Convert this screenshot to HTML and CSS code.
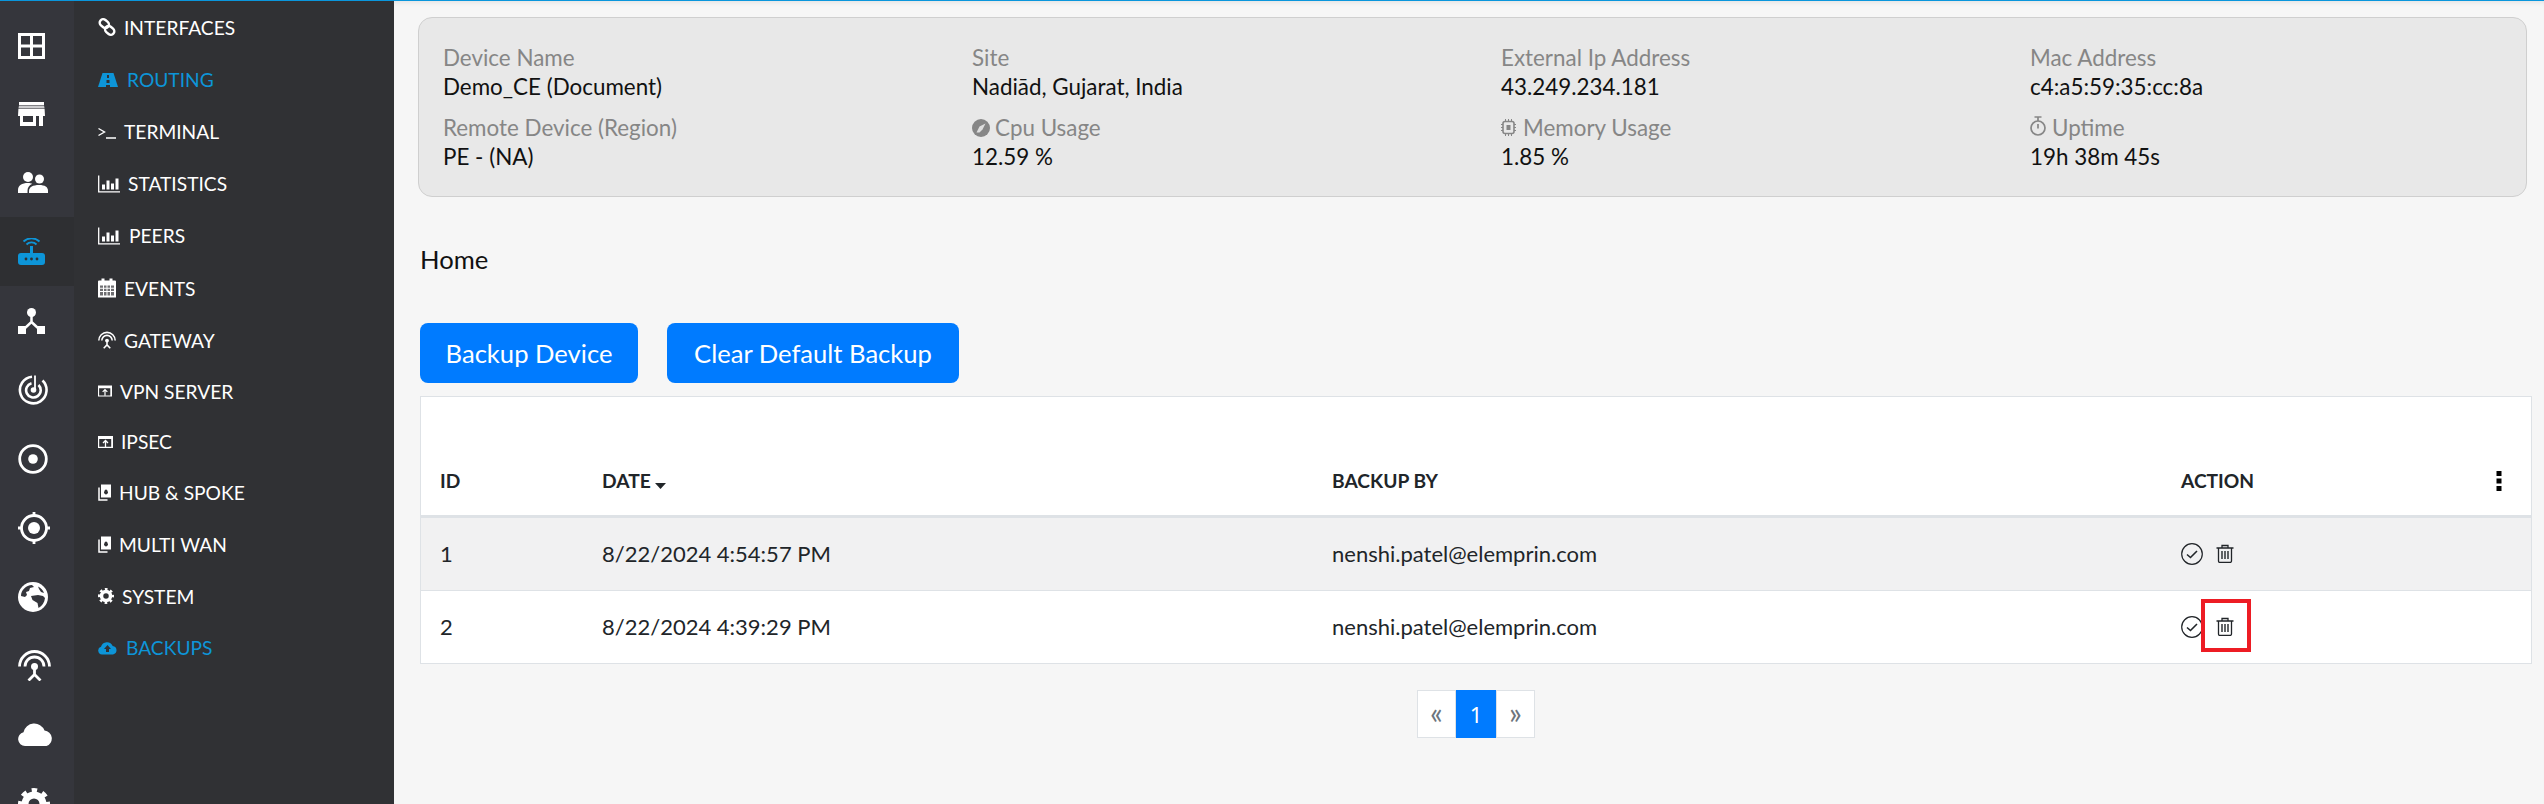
FILE: index.html
```html
<!DOCTYPE html>
<html lang="en">
<head>
<meta charset="utf-8">
<title>Backups</title>
<link rel="stylesheet" href="styles.css">
</head>
<body>
<svg class="defs" aria-hidden="true">
  <symbol id="s-grid" viewBox="0 0 27 26"><path fill="currentColor" fill-rule="evenodd" d="M0 0h27v26H0z M3 3v8.5h9V3z M15 3v8.5h9V3z M3 14.5V23h9v-8.5z M15 14.5V23h9v-8.5z"/></symbol>
  <symbol id="s-store" viewBox="0 0 27 24"><path fill="currentColor" d="M1 0h25v3H1z"/><path fill="currentColor" opacity=".75" d="M1 3.600h25l.6 3H.4z"/><path fill="currentColor" fill-rule="evenodd" d="M.4 7h26.200L27 14h-2v10h-4V14h-3v10H2V14H0z M5 14v6h10v-6z"/></symbol>
  <symbol id="s-people" viewBox="0 0 30 21"><circle cx="10" cy="5" r="5" fill="currentColor"/><circle cx="21.500" cy="7" r="4.500" fill="currentColor"/><path fill="currentColor" d="M0 21v-3c0-4.600 4-7 10-7 1.800 0 3 .3 4.300.8C11 13.300 9.500 15.800 9.500 18.800V21z"/><path fill="currentColor" d="M11 21v-2c0-4 4-6 10-6s9 2 9 6v2z"/></symbol>
  <symbol id="s-router" viewBox="0 0 27 27"><rect y="15" width="27" height="12" rx="3" fill="currentColor"/><rect x="12" y="8" width="3" height="8" fill="currentColor"/><path d="M8.500 6.500a7 7 0 0 1 10 0M5.500 3.500a11.500 11.500 0 0 1 16 0" fill="none" stroke="currentColor" stroke-width="1.800"/><circle cx="8" cy="21" r="1.400" fill="#2e2f32"/><circle cx="13.500" cy="21" r="1.400" fill="#2e2f32"/><circle cx="19" cy="21" r="1.400" fill="#2e2f32"/></symbol>
  <symbol id="s-tree" viewBox="0 0 27 26"><circle cx="13.500" cy="4.500" r="4.500" fill="currentColor"/><rect y="18" width="8" height="8" fill="currentColor"/><rect x="19" y="18" width="8" height="8" fill="currentColor"/><path d="M13.500 8v6L6 21M13.500 14L21 21" fill="none" stroke="currentColor" stroke-width="2.500"/></symbol>
  <symbol id="s-radar" viewBox="0 0 30 30"><path d="M14 1.800A13.300 13.300 0 1 0 24.500 5.500M13.500 8.200A7.300 7.300 0 1 0 20.500 10" fill="none" stroke="currentColor" stroke-width="2.600"/><path d="M17 .5v14" stroke="currentColor" stroke-width="1.800"/><circle cx="15.500" cy="15" r="2.800" fill="currentColor"/></symbol>
  <symbol id="s-target" viewBox="0 0 30 30"><circle cx="15" cy="15" r="13.300" fill="none" stroke="currentColor" stroke-width="2.800"/><circle cx="15" cy="15" r="4.800" fill="currentColor"/></symbol>
  <symbol id="s-cross" viewBox="0 0 32 32"><circle cx="16" cy="16" r="12.500" fill="none" stroke="currentColor" stroke-width="2.800"/><circle cx="16" cy="16" r="6" fill="currentColor"/><path d="M16 0v4M16 28v4M0 16h4M28 16h4" stroke="currentColor" stroke-width="2.800"/></symbol>
  <symbol id="s-globe" viewBox="0 0 30 30"><circle cx="15" cy="15" r="15" fill="currentColor"/><path fill="#35363c" d="M3 14C3 8 8 3.500 14 3l2 2-4 1-1 3-3 1 1 3-2 2zM13 14l7-1 5 1 2 2c-.5 4.500-3 8-6.500 10l-1-5-5-3zM20 4.500c3 1.500 5 3.500 6 6.500l-3-1-2-3z"/></symbol>
  <symbol id="s-antenna" viewBox="0 0 33 31"><path d="M1.500 16.500a15 15 0 0 1 30 0M7 16.500a9.500 9.500 0 0 1 19 0" fill="none" stroke="currentColor" stroke-width="2.800"/><circle cx="16.500" cy="16.500" r="3.500" fill="currentColor"/><path d="M16.500 18v6.500M16.500 24.500L10.500 30.500M16.500 24.500L22.500 30.500" fill="none" stroke="currentColor" stroke-width="2.800"/></symbol>
  <symbol id="s-cloud" viewBox="0 0 36 24"><path fill="currentColor" d="M7 24A7 7 0 0 1 5.500 10.200 11 11 0 0 1 26.500 8.500 8 8 0 0 1 28.500 24z"/></symbol>
  <symbol id="s-gear" viewBox="0 0 32 32"><circle cx="16" cy="16" r="13.500" fill="none" stroke="currentColor" stroke-width="5" stroke-dasharray="5.300 5.300" stroke-dashoffset="2.650"/><circle cx="16" cy="16" r="9" fill="none" stroke="currentColor" stroke-width="7"/></symbol>
  <symbol id="s-link" viewBox="0 0 18 18"><g fill="none" stroke="currentColor" stroke-width="2.400"><rect x="1" y="2" width="10" height="7" rx="3.500" transform="rotate(40 6 6)"/><rect x="7" y="9" width="10" height="7" rx="3.500" transform="rotate(40 12 12)"/></g></symbol>
  <symbol id="s-road" viewBox="0 0 20 14"><path fill="currentColor" d="M4.500 0h11L20 14H0z"/><path fill="#303134" d="M9 2h2v3H9zM8.500 7h3v3h-3zM8 12h4v2H8z"/></symbol>
  <symbol id="s-term" viewBox="0 0 18 14"><path d="M.5 3.500l6 3.500-6 3.500M8 13h10" fill="none" stroke="currentColor" stroke-width="1.400"/></symbol>
  <symbol id="s-bars" viewBox="0 0 22 17"><path d="M.7 0v16.300H22" fill="none" stroke="currentColor" stroke-width="1.300"/><path fill="currentColor" d="M4 9h3v5H4zM8.500 5h3v9h-3zM13 8h3v6h-3zM17.500 3h3v11h-3z"/></symbol>
  <symbol id="s-cal" viewBox="0 0 18 19"><path fill="currentColor" d="M0 3a1 1 0 0 1 1-1h2.500V0h3v2h5V0h3v2H17a1 1 0 0 1 1 1v16H0z"/><path fill="#303134" d="M2 7h3v2.300H2zM6 7h2.500v2.300H6zM9.500 7H12v2.300H9.500zM13 7h3v2.300h-3zM2 10.300h3v2.300H2zM6 10.300h2.500v2.300H6zM9.500 10.300H12v2.300H9.500zM13 10.300h3v2.300h-3zM2 13.600h3V17H2zM6 13.600h2.500V17H6zM9.500 13.600H12V17H9.500zM13 13.600h3V17h-3z" opacity=".7"/></symbol>
  <symbol id="s-updir" viewBox="0 0 15 12"><path fill="currentColor" fill-rule="evenodd" d="M0 0h15v12H0z M1.200 3v7.800h12V3z"/><path d="M7.500 11V5M5 7l2.500-2.500L10 7" fill="none" stroke="currentColor" stroke-width="1.300"/></symbol>
  <symbol id="s-book" viewBox="0 0 13 17"><path fill="currentColor" fill-rule="evenodd" d="M3 0h10v13H3z M6.500 6.500a2 2 0 1 0 3 0 1.500 1.500 0 1 0-3 0z"/><path d="M1 3v12.500h8.500" fill="none" stroke="currentColor" stroke-width="1.500"/></symbol>
  <symbol id="s-upcloud" viewBox="0 0 19 13"><path fill="currentColor" d="M4 13A4 4 0 0 1 3 5.200 6.200 6.200 0 0 1 14.700 4.500 4.300 4.300 0 0 1 15 13z"/><path fill="#303134" d="M9.500 3.500L13 7.500h-2v3H8v-3H6z"/></symbol>
  <symbol id="s-compass" viewBox="0 0 18 18"><circle cx="9" cy="9" r="9" fill="currentColor"/><path fill="#e8e8e8" d="M13.500 4.500L10.500 10.500 7.500 13.500 4.500 13.500 7.500 7.500z" opacity=".9"/></symbol>
  <symbol id="s-chip" viewBox="0 0 15 17"><rect x="2" y="2.500" width="11" height="12" rx="2" fill="none" stroke="currentColor" stroke-width="1.600"/><path fill="currentColor" d="M5.500 6h4v5h-4zM4 0h1v2.500H4zM7 0h1v2.500H7zM10 0h1v2.500h-1zM4 14.500h1V17H4zM7 14.500h1V17H7zM10 14.500h1V17h-1zM0 5h2v1H0zM0 8h2v1H0zM0 11h2v1H0zM13 5h2v1h-2zM13 8h2v1h-2zM13 11h2v1h-2z"/></symbol>
  <symbol id="s-watch" viewBox="0 0 16 20"><circle cx="8" cy="12" r="7" fill="none" stroke="currentColor" stroke-width="1.700"/><path d="M4.500 1h7M8 1v4M8 8v4.500" fill="none" stroke="currentColor" stroke-width="1.700"/></symbol>
  <symbol id="s-check" viewBox="0 0 22 22"><circle cx="11" cy="11" r="10.300" fill="none" stroke="currentColor" stroke-width="1.200"/><path d="M6 11.500l3.500 3L16 8" fill="none" stroke="currentColor" stroke-width="1.600"/></symbol>
  <symbol id="s-trash" viewBox="0 0 18 19"><path d="M.5 4h17M6 4V1.500h6V4M2.500 4v13a1.500 1.500 0 0 0 1.500 1.500h10a1.500 1.500 0 0 0 1.500-1.500V4" fill="none" stroke="currentColor" stroke-width="1.300"/><path d="M6 7v8M9 7v8M12 7v8" stroke="currentColor" stroke-width="1.400"/></symbol>
  <symbol id="s-dots" viewBox="0 0 6 20"><path fill="currentColor" d="M.5 0h5v5h-5zM.5 7.500h5v5h-5zM.5 15h5v5h-5z"/></symbol>
  <symbol id="s-caret" viewBox="0 0 11 6"><path fill="currentColor" d="M0 0h11L5.500 6z"/></symbol>
</svg>

<div class="topline"></div>
<div class="app">
  <nav class="rail">
    <a class="rail-item"><svg class="ri ri-grid"><use href="#s-grid"/></svg></a>
    <a class="rail-item"><svg class="ri ri-store"><use href="#s-store"/></svg></a>
    <a class="rail-item"><svg class="ri ri-people"><use href="#s-people"/></svg></a>
    <a class="rail-item is-active"><svg class="ri ri-router"><use href="#s-router"/></svg></a>
    <a class="rail-item"><svg class="ri ri-tree"><use href="#s-tree"/></svg></a>
    <a class="rail-item"><svg class="ri ri-radar"><use href="#s-radar"/></svg></a>
    <a class="rail-item"><svg class="ri ri-radar"><use href="#s-target"/></svg></a>
    <a class="rail-item"><svg class="ri ri-cross"><use href="#s-cross"/></svg></a>
    <a class="rail-item"><svg class="ri ri-radar"><use href="#s-globe"/></svg></a>
    <a class="rail-item"><svg class="ri ri-antenna"><use href="#s-antenna"/></svg></a>
    <a class="rail-item"><svg class="ri ri-cloud"><use href="#s-cloud"/></svg></a>
    <a class="rail-item"><svg class="ri ri-cross"><use href="#s-gear"/></svg></a>
  </nav>

  <nav class="side">
    <a class="side-item h53"><svg class="si w18"><use href="#s-link"/></svg>INTERFACES</a>
    <a class="side-item is-on"><svg class="si w20 gap1"><use href="#s-road"/></svg>ROUTING</a>
    <a class="side-item"><svg class="si w18"><use href="#s-term"/></svg>TERMINAL</a>
    <a class="side-item"><svg class="si w22"><use href="#s-bars"/></svg>STATISTICS</a>
    <a class="side-item"><svg class="si w22 gap1"><use href="#s-bars"/></svg>PEERS</a>
    <a class="side-item h53"><svg class="si w18"><use href="#s-cal"/></svg>EVENTS</a>
    <a class="side-item h51"><svg class="si w18"><use href="#s-antenna"/></svg>GATEWAY</a>
    <a class="side-item h51"><svg class="si w14"><use href="#s-updir"/></svg>VPN SERVER</a>
    <a class="side-item h50"><svg class="si w15"><use href="#s-updir"/></svg>IPSEC</a>
    <a class="side-item"><svg class="si w13"><use href="#s-book"/></svg>HUB &amp; SPOKE</a>
    <a class="side-item"><svg class="si w13"><use href="#s-book"/></svg>MULTI WAN</a>
    <a class="side-item h51"><svg class="si w16"><use href="#s-gear"/></svg>SYSTEM</a>
    <a class="side-item is-on"><svg class="si w19 gap1"><use href="#s-upcloud"/></svg>BACKUPS</a>
  </nav>

  <main class="main">
    <section class="info">
      <div class="field"><div class="label">Device Name</div><div class="value">Demo_CE (Document)</div></div>
      <div class="field"><div class="label">Site</div><div class="value">Nadiād, Gujarat, India</div></div>
      <div class="field"><div class="label">External Ip Address</div><div class="value">43.249.234.181</div></div>
      <div class="field"><div class="label">Mac Address</div><div class="value">c4:a5:59:35:cc:8a</div></div>
      <div class="field"><div class="label">Remote Device (Region)</div><div class="value">PE - (NA)</div></div>
      <div class="field"><div class="label"><svg class="li li-compass"><use href="#s-compass"/></svg>Cpu Usage</div><div class="value">12.59 %</div></div>
      <div class="field"><div class="label"><svg class="li li-chip"><use href="#s-chip"/></svg>Memory Usage</div><div class="value">1.85 %</div></div>
      <div class="field"><div class="label"><svg class="li li-watch"><use href="#s-watch"/></svg>Uptime</div><div class="value">19h 38m 45s</div></div>
    </section>

    <h1 class="crumb">Home</h1>

    <div class="actions">
      <button class="btn btn-backup">Backup Device</button>
      <button class="btn btn-clear">Clear Default Backup</button>
    </div>

    <table class="grid">
      <colgroup><col class="c-id"><col class="c-date"><col class="c-by"><col></colgroup>
      <thead>
        <tr>
          <th>ID</th>
          <th>DATE<svg class="caret"><use href="#s-caret"/></svg></th>
          <th>BACKUP BY</th>
          <th class="th-action">ACTION<svg class="dots"><use href="#s-dots"/></svg></th>
        </tr>
      </thead>
      <tbody>
        <tr class="row-alt">
          <td>1</td><td>8/22/2024 4:54:57 PM</td><td>nenshi.patel@elemprin.com</td>
          <td><div class="row-icons"><svg class="ai-check"><use href="#s-check"/></svg><svg class="ai-trash"><use href="#s-trash"/></svg></div></td>
        </tr>
        <tr>
          <td>2</td><td>8/22/2024 4:39:29 PM</td><td>nenshi.patel@elemprin.com</td>
          <td><div class="row-icons"><svg class="ai-check"><use href="#s-check"/></svg><span class="trash-wrap"><svg class="ai-trash"><use href="#s-trash"/></svg><span class="marker"></span></span></div></td>
        </tr>
      </tbody>
    </table>

    <div class="pager">
      <span class="pg pg-arrow">«</span><span class="pg pg-on">1</span><span class="pg pg-arrow">»</span>
    </div>
  </main>
</div>
</body>
</html>
```

FILE: styles.css
```css
* { box-sizing: border-box; }
html, body { margin: 0; height: 804px; overflow: hidden; }
body {
  display: flex;
  flex-direction: column;
  font-family: Lato, "Noto Sans", sans-serif;
  background: #f6f6f6;
  color: #212529;
}
.defs { width: 0; height: 0; position: absolute; }
.topline { height: 1px; background: #0a96dc; flex: none; }
.app { display: flex; flex: 1; min-height: 0; }

/* icon rail */
.rail { width: 74px; flex: none; background: #35363c; padding-top: 9px; color: #fff; }
.rail-item { display: flex; align-items: center; height: 69px; padding-left: 18px; }
.rail-item.is-active { background: #2e2f32; color: #0d95d8; }
.ri { display: block; }
.ri-grid { width: 27px; height: 26px; margin-top: 3px; }
.ri-store { width: 27px; height: 24px; }
.ri-people { width: 30px; height: 21px; }
.ri-router { width: 27px; height: 27px; }
.ri-tree { width: 27px; height: 26px; }
.ri-radar { width: 30px; height: 30px; }
.ri-cross { width: 32px; height: 32px; }
.ri-antenna { width: 33px; height: 31px; }
.ri-cloud { width: 36px; height: 24px; margin-top: -2px; }

/* section nav */
.side { width: 320px; flex: none; background: #303134; padding-left: 24px; }
.side-item {
  display: flex;
  align-items: center;
  gap: 8px;
  height: 52px;
  padding-bottom: 1px;
  font-size: 19.2px;
  color: #fff;
  white-space: nowrap;
}
.side-item.h53 { height: 53px; }
.side-item.h51 { height: 51px; }
.side-item.h50 { height: 50px; }
.side-item.is-on { color: #0d95d8; }
.si { display: block; height: 20px; flex: none; }
.w13 { width: 13px; }
.w14 { width: 14px; }
.w15 { width: 15px; }
.w16 { width: 16px; }
.w18 { width: 18px; }
.w19 { width: 19px; }
.w20 { width: 20px; }
.w22 { width: 22px; }
.gap1 { margin-right: 1px; }

/* main */
.main { flex: 1; min-width: 0; padding: 16px 0 0 26px; box-shadow: inset 0 5px 6px -5px rgba(0,0,0,.12); }
.info {
  display: grid;
  grid-template-columns: repeat(4, 529px);
  align-content: start;
  row-gap: 12px;
  width: 2109px;
  height: 180px;
  margin-left: -2px;
  padding: 25px 0 0 24px;
  background: #e8e8e8;
  border: 1px solid #cfcfcf;
  border-radius: 14px;
  font-size: 22.4px;
}
.label, .value { height: 29px; line-height: 29px; white-space: nowrap; }
.label { display: flex; align-items: center; color: #868686; }
.value { color: #111; }
.li { display: block; margin-right: 4px; flex: none; }
.li-compass { width: 18px; height: 18px; margin-right: 5px; }
.li-chip { width: 15px; height: 17px; margin-right: 7px; }
.li-watch { width: 16px; height: 20px; margin-right: 6px; margin-top: -3px; }

.crumb { margin: 43px 0 43px 0; height: 40px; line-height: 39px; font-size: 25.6px; font-weight: 400; color: #111; }

.actions { display: flex; gap: 29px; }
.btn {
  height: 60px;
  border: 0;
  border-radius: 8px;
  background: #007bff;
  color: #fff;
  font: 400 25.6px Lato, sans-serif;
  padding: 0;
}
.btn-backup { width: 218px; }
.btn-clear { width: 292px; }

.grid {
  width: 2112px;
  margin-top: 13px;
  border-collapse: separate;
  border-spacing: 0;
  table-layout: fixed;
  background: #fff;
  border: 1px solid #dee2e6;
  font-size: 22px;
}
.c-id { width: 162px; }
.c-date { width: 730px; }
.c-by { width: 849px; }
.grid th {
  height: 121px;
  padding: 49px 0 0 19px;
  text-align: left;
  font-size: 19.2px;
  font-weight: 700;
  border-bottom: 3px solid #dee2e6;
  white-space: nowrap;
}
.grid td { height: 73px; padding: 0 0 1px 19px; white-space: nowrap; border-top: 1px solid #dee2e6; }
.grid tbody tr:first-child td { height: 72px; border-top: 0; }
.row-alt { background: #f1f1f2; }
.th-action { position: relative; }
.caret { display: inline-block; width: 11px; height: 6px; margin-left: 4px; vertical-align: -1px; }
.dots { position: absolute; right: 29px; top: 74px; width: 6px; height: 20px; color: #000; }
.row-icons { display: flex; align-items: center; gap: 13px; color: #212529; }
.ai-check { display: block; width: 22px; height: 22px; }
.ai-trash { display: block; width: 18px; height: 19px; }
.trash-wrap { position: relative; display: block; }
.marker {
  position: absolute;
  left: -15px;
  top: -18px;
  width: 50px;
  height: 53px;
  border: 4px solid #ed1c24;
}

.pager { display: flex; justify-content: center; width: 2112px; margin-top: 26px; font-size: 20px; }
.pg { display: flex; align-items: center; justify-content: center; height: 48px; }
.pg-arrow { width: 39px; background: #fff; border: 1px solid #dee2e6; color: #6c757d; font-size: 30px; line-height: 1; padding-bottom: 5px; }
.pg-on { width: 40px; background: #007bff; color: #fff; font-family: "Noto Sans", sans-serif; font-size: 22px; }
```
